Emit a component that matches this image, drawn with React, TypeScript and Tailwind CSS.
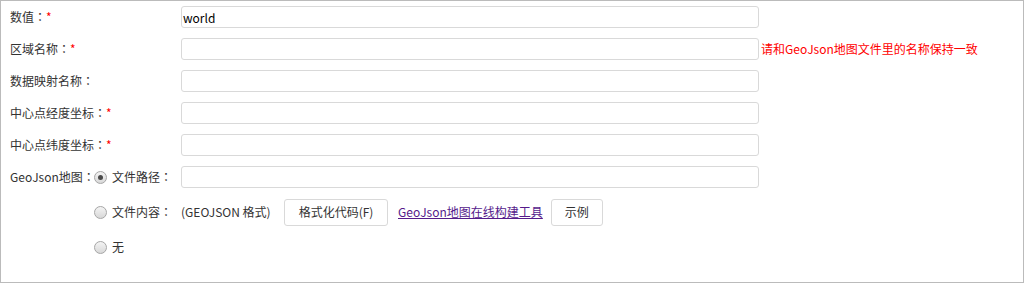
import React from 'react'

const font = { fontFamily: '"Microsoft YaHei", "Noto Sans CJK SC", sans-serif' }

// full-width colon centred in its cell, as in the original
function Colon() {
  return <span style={{ fontFamily: '"Noto Sans CJK TC", sans-serif' }}>：</span>
}

function Radio({ checked }: { checked?: boolean }) {
  return (
    <span className="inline-flex h-[13px] w-[13px] shrink-0 items-center justify-center rounded-full border border-[#a6a6a6] bg-gradient-to-b from-[#f4f4f4] to-[#d8d8d8]">
      {checked && <span className="h-[5px] w-[5px] rounded-full bg-[#4a4a4a]" />}
    </span>
  )
}

function TextInput({ value }: { value?: string }) {
  return (
    <input
      readOnly
      value={value ?? ''}
      className="h-[22px] w-[578px] rounded-[3px] border border-[#d9d9d9] bg-white px-[1px] text-[12px] text-black outline-none"
      style={font}
    />
  )
}

function FieldRow({ label, required, value, hint }: { label: string; required?: boolean; value?: string; hint?: string }) {
  return (
    <div className="flex h-[32px] items-center">
      <div className="w-[171px] shrink-0 whitespace-nowrap text-[12px] text-[#333]">
        {label}
        <Colon />
        {required && <span className="text-[#ff0000]">*</span>}
      </div>
      <TextInput value={value} />
      {hint && <span className="ml-[2px] whitespace-nowrap text-[12px] text-[#ff0000]">{hint}</span>}
    </div>
  )
}

export default function App() {
  return (
    <div className="h-[283px] w-[1024px] border border-[#bbbbbb] bg-white pl-[9px]" style={font}>
      <FieldRow label="数值" required value="world" />
      <FieldRow label="区域名称" required hint="请和GeoJson地图文件里的名称保持一致" />
      <FieldRow label="数据映射名称" />
      <FieldRow label="中心点经度坐标" required />
      <FieldRow label="中心点纬度坐标" required />

      <div className="flex h-[32px] items-center whitespace-nowrap text-[12px] text-[#333]">
        <div className="w-[84px] shrink-0">
          GeoJson地图<Colon />
        </div>
        <Radio checked />
        <span className="ml-[5px] w-[69px] shrink-0">
          文件路径<Colon />
        </span>
        <TextInput />
      </div>

      <div className="flex h-[38px] items-center whitespace-nowrap text-[12px] text-[#333]">
        <div className="w-[84px] shrink-0" />
        <Radio />
        <span className="ml-[5px] w-[69px] shrink-0">
          文件内容<Colon />
        </span>
        <span className="w-[103px] shrink-0">(GEOJSON 格式)</span>
        <button className="h-[27px] w-[104px] rounded-[3px] border border-[#d9d9d9] bg-white text-[12px] text-[#333]">
          格式化代码(F)
        </button>
        <a href="#" className="ml-[10px] text-[12px] text-[#551a8b] underline">
          GeoJson地图在线构建工具
        </a>
        <button className="ml-[8px] h-[27px] w-[52px] rounded-[3px] border border-[#d9d9d9] bg-white text-[12px] text-[#333]">
          示例
        </button>
      </div>

      <div className="flex h-[32px] items-center text-[12px] text-[#333]">
        <div className="w-[84px] shrink-0" />
        <Radio />
        <span className="ml-[5px]">无</span>
      </div>
    </div>
  )
}
